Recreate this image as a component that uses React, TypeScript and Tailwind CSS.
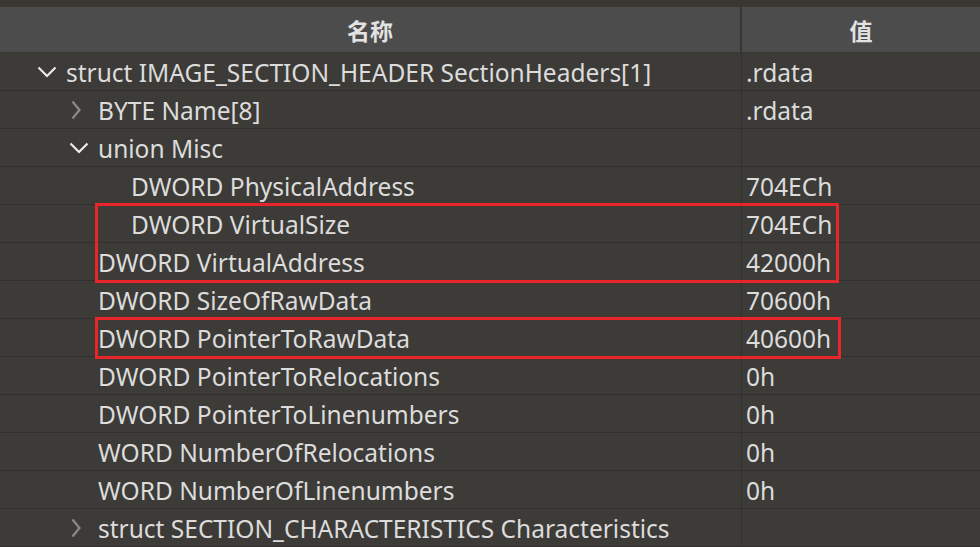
import React from "react";

type Row = { level: number; chev?: "open" | "closed"; name: string; value: string };

const rows: Row[] = [
  { level: 0, chev: "open", name: "struct IMAGE_SECTION_HEADER SectionHeaders[1]", value: ".rdata" },
  { level: 1, chev: "closed", name: "BYTE Name[8]", value: ".rdata" },
  { level: 1, chev: "open", name: "union Misc", value: "" },
  { level: 2, name: "DWORD PhysicalAddress", value: "704ECh" },
  { level: 2, name: "DWORD VirtualSize", value: "704ECh" },
  { level: 1, name: "DWORD VirtualAddress", value: "42000h" },
  { level: 1, name: "DWORD SizeOfRawData", value: "70600h" },
  { level: 1, name: "DWORD PointerToRawData", value: "40600h" },
  { level: 1, name: "DWORD PointerToRelocations", value: "0h" },
  { level: 1, name: "DWORD PointerToLinenumbers", value: "0h" },
  { level: 1, name: "WORD NumberOfRelocations", value: "0h" },
  { level: 1, name: "WORD NumberOfLinenumbers", value: "0h" },
  { level: 1, chev: "closed", name: "struct SECTION_CHARACTERISTICS Characteristics", value: "" },
];

const pad = ["pl-[66px]", "pl-[98px]", "pl-[131px]"];
const openPos = ["left-[37px]", "left-[69px]", "left-[102px]"];
const closedPos = ["left-[71px]", "left-[71px]", "left-[104px]"];

function Chevron({ open }: { open: boolean }) {
  return open ? (
    <svg width="20" height="12" viewBox="0 0 20 12">
      <path d="M1.5 1.5 L10 10 L18.5 1.5" fill="none" stroke="#ececec" strokeWidth="2.2" />
    </svg>
  ) : (
    <svg width="10" height="20" viewBox="0 0 10 20">
      <path d="M1.5 1.5 L8.5 10 L1.5 18.5" fill="none" stroke="#8a8a8a" strokeWidth="2.2" />
    </svg>
  );
}

export default function App() {
  return (
    <div
      className="relative w-[980px] h-[547px] overflow-hidden bg-[#3c3b37] text-[#dcdcdc]"
      style={{ fontFamily: '"Noto Sans", "Noto Sans CJK SC", sans-serif' }}
    >
      <div className="h-[7px] bg-[#383732]" />
      <div className="flex h-[46px] bg-[#4c4c4c] border-b border-[#383732]">
        <div className="w-[740px] flex items-center justify-center pt-[3px] text-[23px] font-bold text-[#e2e2e2]">
          名称
        </div>
        <div className="w-[2px] bg-[#383732]" />
        <div className="flex-1 flex items-center justify-center pt-[3px] text-[23px] font-bold text-[#e2e2e2]">
          值
        </div>
      </div>
      {rows.map((r, i) => (
        <div key={i} className="flex h-[38px] border-b border-[#31302c]">
          <div className={`relative w-[741px] flex items-center pt-[2px] text-[24.5px] leading-[30px] whitespace-nowrap ${pad[r.level]}`}>
            {r.chev && (
              <div className={`absolute top-0 bottom-0 flex items-center ${r.chev === "open" ? openPos[r.level] : closedPos[r.level]}`}>
                <Chevron open={r.chev === "open"} />
              </div>
            )}
            {r.name}
          </div>
          <div className="w-[1px] bg-[#31302c]" />
          <div className="flex-1 flex items-center pl-[4px] pt-[2px] text-[24.5px] leading-[30px]">{r.value}</div>
        </div>
      ))}
      <div className="absolute left-[95px] top-[203px] w-[744px] h-[80px] border-[3px] border-[#e8262a]" />
      <div className="absolute left-[95px] top-[317px] w-[746px] h-[42px] border-[3px] border-[#e8262a]" />
    </div>
  );
}
